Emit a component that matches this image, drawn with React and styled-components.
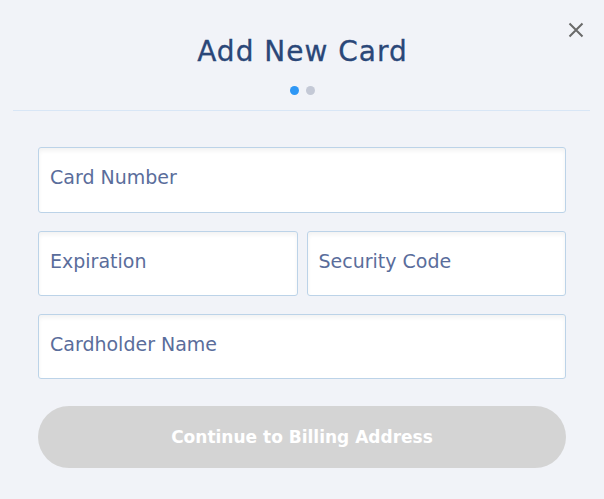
import React from "react";
import styled, { createGlobalStyle } from "styled-components";

const FONT = `"DejaVu Sans", "Noto Sans", sans-serif`;

const Global = createGlobalStyle`
  html, body { margin: 0; padding: 0; background: #f1f3f8; }
  * { box-sizing: border-box; }
  body { font-family: ${FONT}; }
`;

const Modal = styled.div`
  position: relative;
  width: 604px;
  height: 499px;
  background: #f1f3f8;
  display: flex;
  flex-direction: column;
`;

const Close = styled.button`
  position: absolute;
  top: 21px;
  right: 19px;
  width: 18px;
  height: 18px;
  padding: 0;
  border: none;
  background: transparent;
  cursor: pointer;
  display: flex;
  align-items: center;
  justify-content: center;
`;

const Header = styled.header`
  display: flex;
  flex-direction: column;
  align-items: center;
  padding-top: 36px;
`;

const Title = styled.h1`
  margin: 0;
  padding-left: 1px;
  font-size: 28px;
  line-height: 32px;
  font-weight: 400;
  color: #2a4778;
  letter-spacing: 1px;
  -webkit-text-stroke: 0.3px #2a4778;
`;

const Dots = styled.div`
  display: flex;
  gap: 7px;
  margin-top: 18px;
`;

const Dot = styled.span`
  width: 9px;
  height: 9px;
  border-radius: 50%;
  background: ${(p) => (p.$active ? "#2e97f5" : "#c4c9d6")};
`;

const Divider = styled.hr`
  margin: 15px 14px 0 13px;
  border: none;
  border-top: 1px solid #d8e6f6;
  height: 0;
`;

const Form = styled.form`
  display: flex;
  flex-direction: column;
  gap: 18px;
  padding: 36px 38px 0;
`;

const Row = styled.div`
  display: grid;
  grid-template-columns: ${(p) => (p.$split ? "1fr 1fr" : "1fr")};
  gap: 9px;
`;

const Field = styled.input`
  width: 100%;
  height: ${(p) => (p.$tall ? "66px" : "65px")};
  background: #fff;
  border: 1px solid #bcd3e8;
  border-radius: 3px;
  box-shadow: inset 0 3px 4px rgba(0, 0, 0, 0.05);
  padding: 0 11px 6px;
  font-family: ${FONT};
  font-size: 19px;
  color: #5a6d9b;
  outline: none;
  &::placeholder {
    color: #5a6d9b;
    opacity: 1;
  }
`;

const Submit = styled.button`
  margin-top: 9px;
  height: 62px;
  border: none;
  border-radius: 31px;
  background: #d4d4d4;
  color: #fff;
  font-family: ${FONT};
  font-size: 17px;
  font-weight: 700;
`;

export default function App() {
  return (
    <>
      <Global />
      <Modal>
        <Close aria-label="Close">
          <svg width="16" height="16" viewBox="0 0 16 16">
            <path d="M1.5 1.5 L14.5 14.5 M14.5 1.5 L1.5 14.5" stroke="#6a6a6a" strokeWidth="2" />
          </svg>
        </Close>
        <Header>
          <Title>Add New Card</Title>
          <Dots>
            <Dot $active />
            <Dot />
          </Dots>
        </Header>
        <Divider />
        <Form onSubmit={(e) => e.preventDefault()}>
          <Row>
            <Field $tall placeholder="Card Number" />
          </Row>
          <Row $split>
            <Field placeholder="Expiration" />
            <Field placeholder="Security Code" />
          </Row>
          <Row>
            <Field placeholder="Cardholder Name" />
          </Row>
          <Submit type="button" disabled>Continue to Billing Address</Submit>
        </Form>
      </Modal>
    </>
  );
}
